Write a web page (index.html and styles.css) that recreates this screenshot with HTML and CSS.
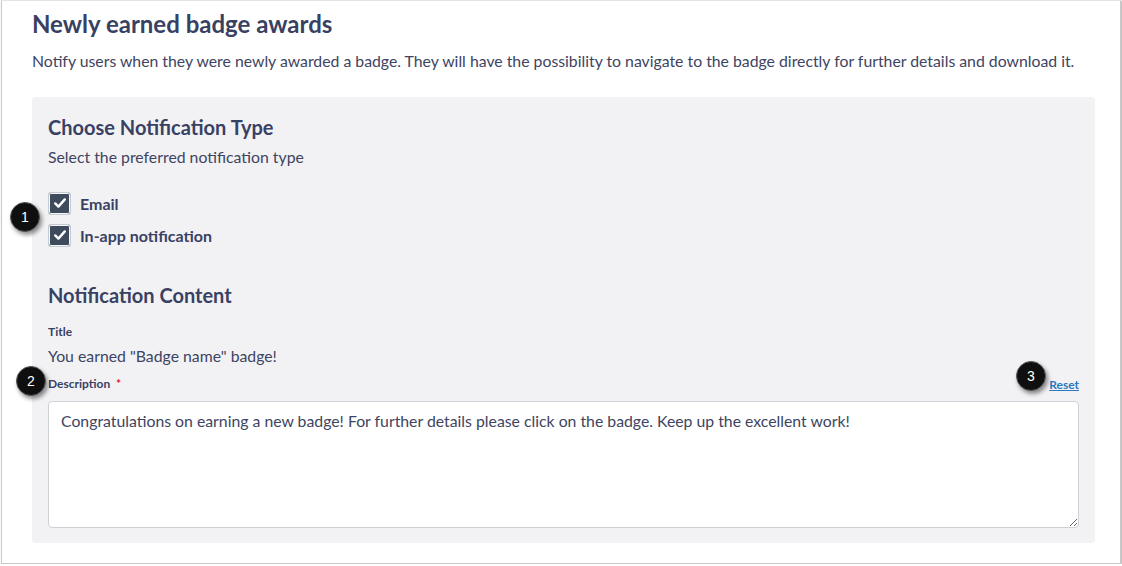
FILE: index.html
```html
<!DOCTYPE html>
<html lang="en">
<head>
<meta charset="utf-8">
<link rel="stylesheet" href="styles.css">
</head>
<body>
<div class="frame">
  <h1 class="title">Newly earned badge awards</h1>
  <p class="lead">Notify users when they were newly awarded a badge. They will have the possibility to navigate to the badge directly for further details and download it.</p>
  <div class="panel">
    <h2 class="section">Choose Notification Type</h2>
    <p class="sub">Select the preferred notification type</p>
    <div class="checks">
      <label class="check"><span class="box"><svg viewBox="0 0 20 20" width="16" height="16"><path d="M4 10.5l4 4 8-9" fill="none" stroke="#fff" stroke-width="3" stroke-linecap="round" stroke-linejoin="round"/></svg></span>Email</label>
      <label class="check"><span class="box"><svg viewBox="0 0 20 20" width="16" height="16"><path d="M4 10.5l4 4 8-9" fill="none" stroke="#fff" stroke-width="3" stroke-linecap="round" stroke-linejoin="round"/></svg></span>In-app notification</label>
      <span class="callout c1">1</span>
    </div>
    <h2 class="section content">Notification Content</h2>
    <div class="field-label">Title</div>
    <p class="sub value">You earned "Badge name" badge!</p>
    <div class="desc-row">
      <span class="field-label">Description <span class="req">*</span></span>
      <a class="reset" href="#">Reset</a>
      <span class="callout c2">2</span>
      <span class="callout c3">3</span>
    </div>
    <textarea class="area">Congratulations on earning a new badge! For further details please click on the badge. Keep up the excellent work!</textarea>
  </div>
</div>
</body>
</html>
```
FILE: styles.css
```css
html, body {
  margin: 0;
  padding: 0;
  background: #fff;
}
body {
  font-family: Lato, "Noto Sans", sans-serif;
  color: #3e4461;
}
.frame {
  position: relative;
  box-sizing: border-box;
  width: 1120px;
  height: 564px;
  margin-left: 1px;
  border: 1px solid #c9c9c9;
  border-top-color: #e4e4e4;
  box-shadow: 1px 1px 2px rgba(0,0,0,0.35);
  padding: 8px 25px 0 30px;
}
.title {
  margin: 0;
  font-size: 24px;
  line-height: 30px;
  font-weight: 700;
  color: #394163;
}
.lead {
  margin: 10px 0 0;
  font-size: 15.8px;
  line-height: 24px;
}
.panel {
  position: relative;
  margin-top: 24px;
  background: #f2f2f5;
  border-radius: 4px;
  padding: 16px;
  height: 446px;
  box-sizing: border-box;
}
.section {
  margin: 0;
  font-size: 20px;
  line-height: 28px;
  font-weight: 700;
  color: #394163;
}
.sub {
  margin: 5px 0 0;
  font-size: 15.8px;
  line-height: 22px;
}
.checks {
  position: relative;
  margin-top: 23px;
  display: flex;
  flex-direction: column;
  gap: 8px;
}
.check {
  display: flex;
  align-items: center;
  gap: 9px;
  height: 24px;
  font-size: 16px;
  font-weight: 700;
  color: #394163;
}
.box {
  box-sizing: border-box;
  width: 23px;
  height: 23px;
  border-radius: 3px;
  background: #3d4b5c;
  border: 1px solid #c5cbd2;
  box-shadow: inset 0 0 0 1px #f6f6f8;
  display: flex;
  align-items: center;
  justify-content: center;
}
.section.content {
  margin-top: 34px;
}
.field-label {
  margin-top: 15px;
  font-size: 12px;
  line-height: 16px;
  font-weight: 700;
  color: #394163;
}
.value {
  margin-top: 5px;
}
.desc-row {
  position: relative;
  margin-top: 9px;
  display: flex;
  justify-content: space-between;
  align-items: center;
  height: 16px;
}
.desc-row .field-label {
  margin-top: 0;
}
.req {
  color: #e0162b;
  margin-left: 3px;
}
.reset {
  font-size: 12px;
  font-weight: 700;
  color: #2b78bd;
  text-decoration: underline;
}
.area {
  display: block;
  box-sizing: border-box;
  margin-top: 9px;
  width: 100%;
  height: 127px;
  border: 1px solid #cfd1d6;
  border-radius: 4px;
  background: #fff;
  padding: 8px 12px;
  font-family: Lato, "Noto Sans", sans-serif;
  font-size: 15.8px;
  line-height: 22px;
  color: #3e4461;
  resize: vertical;
  outline: none;
}
.callout {
  position: absolute;
  width: 30px;
  height: 30px;
  border-radius: 50%;
  background: #0f0f10;
  border: 1px solid #5a5a5a;
  box-sizing: border-box;
  color: #fff;
  font-family: "Liberation Sans", Arial, sans-serif;
  font-size: 14px;
  line-height: 28px;
  text-align: center;
  box-shadow: 2px 3px 4px rgba(0,0,0,0.45);
}
.c1 {
  left: -38px;
  top: 11px;
}
.c2 {
  left: -32px;
  top: -10px;
}
.c3 {
  right: 33px;
  top: -15px;
}
```
